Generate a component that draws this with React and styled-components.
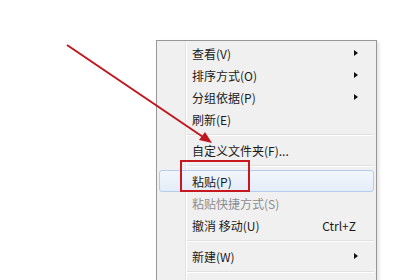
import React from 'react';
import styled, { createGlobalStyle } from 'styled-components';

const GlobalStyle = createGlobalStyle`
  html, body {
    margin: 0;
    padding: 0;
    background: #ffffff;
    overflow: hidden;
  }
  body {
    font-family: "Noto Sans CJK SC", "Microsoft YaHei", sans-serif;
  }
`;

const Page = styled.div`
  position: relative;
  width: 420px;
  height: 280px;
  overflow: hidden;
  background: #ffffff;
  padding: 40px 0 0 156px;
  box-sizing: border-box;
`;

const Menu = styled.div`
  position: relative;
  width: 221px;
  border: 1px solid #979797;
  background: #f0f0f0;
  padding: 1px 2px;
  box-sizing: border-box;
  display: flex;
  flex-direction: column;
  box-shadow: 2px 2px 3px rgba(0, 0, 0, 0.12);

  &::before {
    content: '';
    position: absolute;
    top: 0;
    bottom: 0;
    left: 28px;
    width: 1px;
    background: #e2e3e3;
    box-shadow: 1px 0 0 #ffffff;
  }
`;

const Row = styled.div`
  position: relative;
  height: 22px;
  display: flex;
  align-items: center;
  padding-left: 32px;
  padding-right: 10px;
  font-size: 12px;
  color: ${p => (p.$disabled ? '#8d8d8d' : '#1a1a1a')};
  border: 1px solid ${p => (p.$active ? '#b4cdec' : 'transparent')};
  border-radius: 3px;
  background: ${p =>
    p.$active ? 'linear-gradient(#f2f6fc, #e3ecf8)' : 'transparent'};
  box-sizing: border-box;
  z-index: 1;
`;

const Label = styled.span`
  flex: 1;
  white-space: nowrap;
`;

const Shortcut = styled.span`
  margin-right: 7px;
  white-space: nowrap;
`;

const Caret = styled.span`
  width: 0;
  height: 0;
  border-top: 3.5px solid transparent;
  border-bottom: 3.5px solid transparent;
  border-left: 4px solid #111;
  margin-right: 5px;
`;

const Separator = styled.div`
  height: 9px;
  display: flex;
  align-items: center;
  padding-left: 28px;
  position: relative;
  z-index: 1;

  &::after {
    content: '';
    flex: 1;
    height: 1px;
    background: #e0e0e0;
    border-bottom: 1px solid #ffffff;
  }
`;

const RedBox = styled.div`
  position: absolute;
  left: 180px;
  top: 160px;
  width: 70px;
  height: 32px;
  border: 2px solid #c8181f;
  box-sizing: border-box;
  z-index: 3;
`;

const Arrow = styled.svg`
  position: absolute;
  left: 0;
  top: 0;
  z-index: 3;
`;

const items = [
  { label: '查看(V)', sub: true },
  { label: '排序方式(O)', sub: true },
  { label: '分组依据(P)', sub: true },
  { label: '刷新(E)' },
  { sep: true },
  { label: '自定义文件夹(F)...' },
  { sep: true },
  { label: '粘贴(P)', active: true },
  { label: '粘贴快捷方式(S)', disabled: true },
  { label: '撤消 移动(U)', shortcut: 'Ctrl+Z' },
  { sep: true },
  { label: '新建(W)', sub: true },
  { sep: true },
  { label: '属性(R)' },
];

export default function App() {
  return (
    <Page>
      <GlobalStyle />
      <Menu>
        {items.map((it, i) =>
          it.sep ? (
            <Separator key={i} />
          ) : (
            <Row key={i} $active={it.active} $disabled={it.disabled}>
              <Label>{it.label}</Label>
              {it.shortcut && <Shortcut>{it.shortcut}</Shortcut>}
              {it.sub && <Caret />}
            </Row>
          )
        )}
      </Menu>
      <RedBox />
      <Arrow width="420" height="280" viewBox="0 0 420 280">
        <line x1="67" y1="45" x2="206" y2="139" stroke="#c0161d" strokeWidth="2" />
        <polygon points="212,143 199,140 205,132" fill="#c0161d" />
      </Arrow>
    </Page>
  );
}
